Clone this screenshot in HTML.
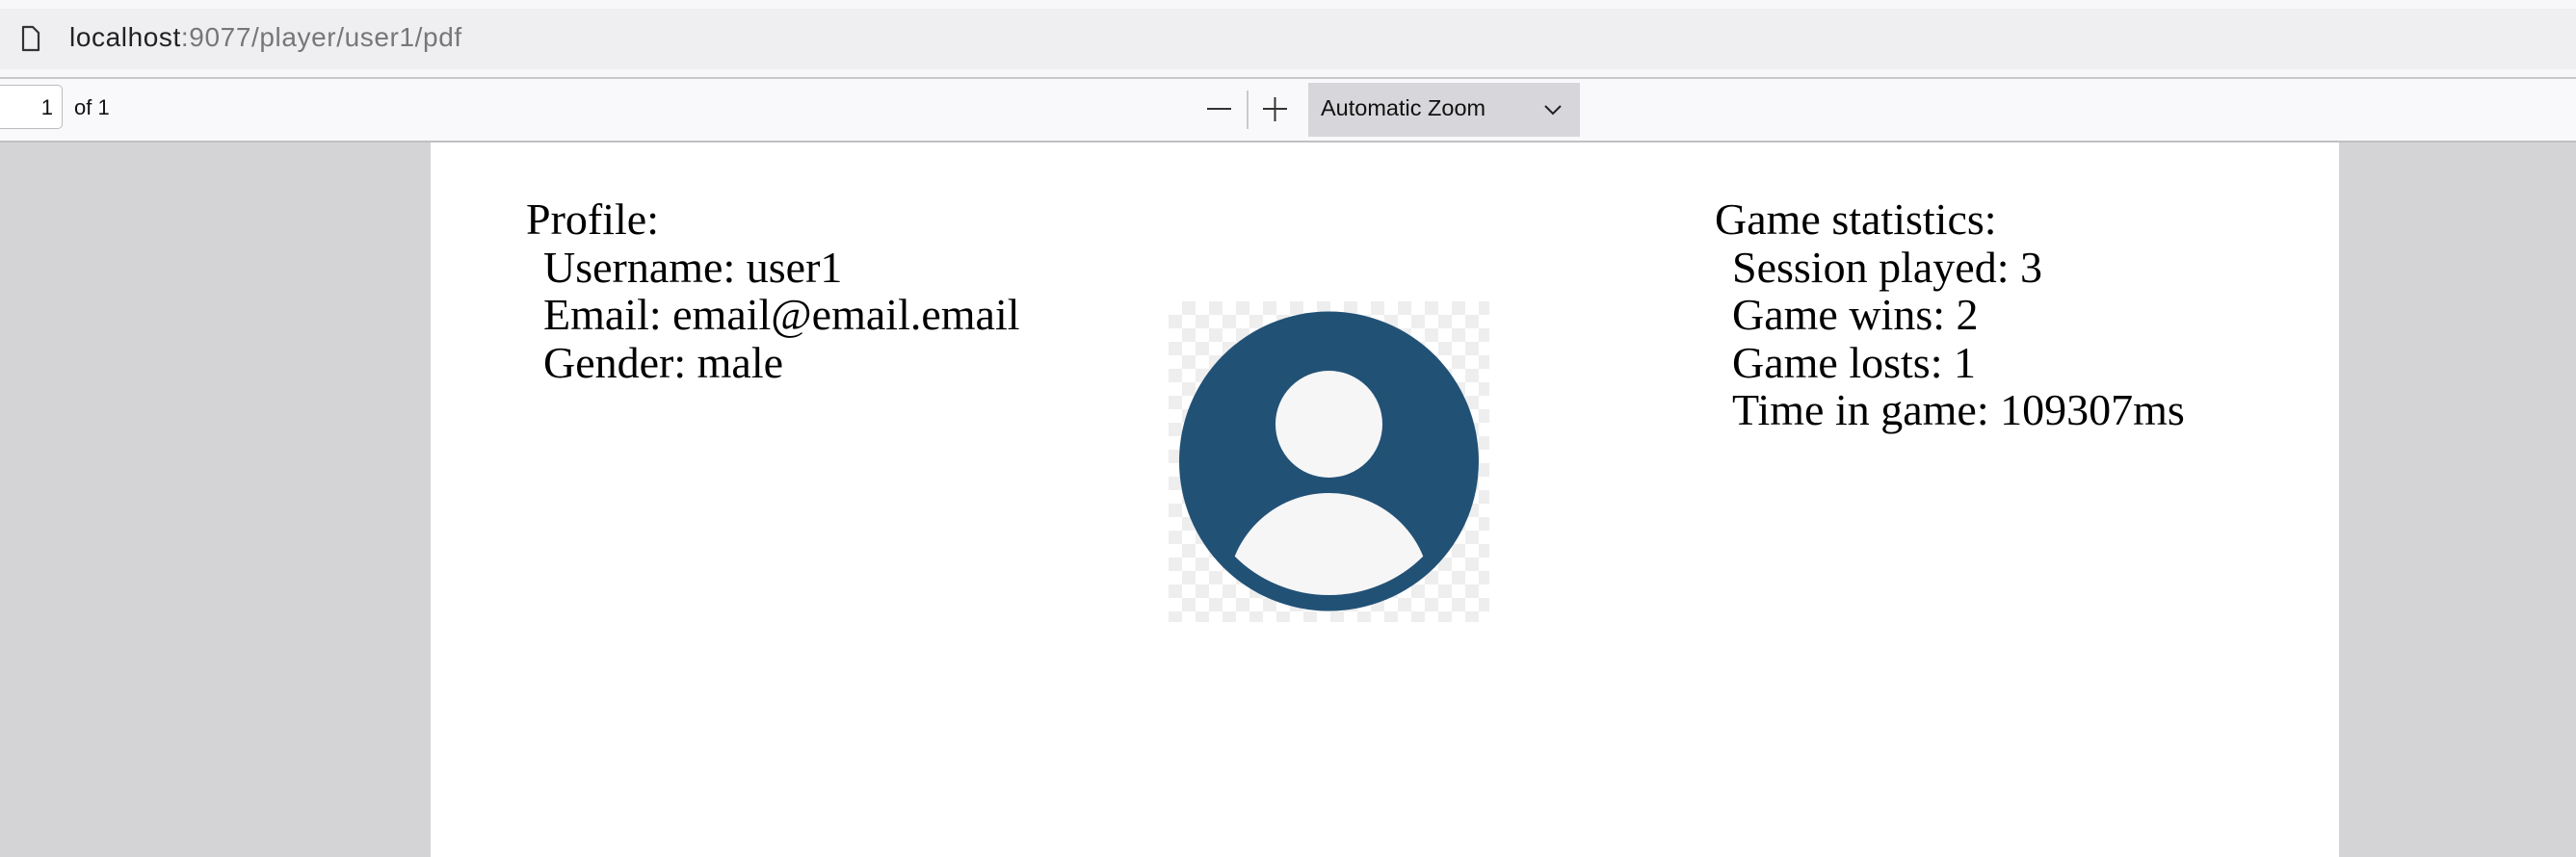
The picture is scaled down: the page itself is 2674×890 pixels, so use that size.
<!DOCTYPE html>
<html><head><meta charset="utf-8"><style>
*{margin:0;padding:0;box-sizing:border-box}
body{width:2674px;height:890px;overflow:hidden;background:#d4d4d7;position:relative;font-family:"Liberation Sans",sans-serif}
.top{position:absolute;left:0;top:0;width:2674px;height:9px;background:#f7f7f9}
.addr{position:absolute;left:0;top:9px;width:2674px;height:63px;background:#efeff2}
.gap{position:absolute;left:0;top:72px;width:2674px;height:9px;background:#f7f7f9}
.tb{position:absolute;left:0;top:80px;width:2674px;height:68px;background:#f9f9fb;border-top:2px solid #c8c8cc;border-bottom:2px solid #c0c0c4}
.url{position:absolute;left:72px;top:14px;font-size:28px;letter-spacing:0.6px;color:#222}
.url span{color:#777}
.inp{position:absolute;left:-8px;top:88px;width:73px;height:46px;background:#fff;border:1.5px solid #bbb;border-radius:5px;font-size:22px;text-align:right;padding:10px 9px 0 0;color:#111}
.of{position:absolute;left:77px;top:99px;font-size:22px;color:#111}
.zoom{position:absolute;left:1358px;top:86px;width:282px;height:56px;background:#d7d7db;font-size:23.5px;color:#111;padding:13px 0 0 13px}
.page{position:absolute;left:447px;top:148px;width:1981px;height:742px;background:#fff}
.t{position:absolute;font-family:"Liberation Serif",serif;font-size:46px;line-height:49.5px;color:#000;white-space:nowrap}
.t div{padding-left:18px}
.chk{position:absolute;left:1213px;top:313px;width:333px;height:333px;background-color:#fff;background-image:linear-gradient(45deg,#eee 25%,transparent 25%,transparent 75%,#eee 75%),linear-gradient(45deg,#eee 25%,transparent 25%,transparent 75%,#eee 75%);background-size:28px 28px;background-position:0 0,14px 14px}
</style></head><body>
<div class="top"></div>
<div class="addr">
<svg style="position:absolute;left:22px;top:17px" width="20" height="28" viewBox="0 0 20 28"><path d="M2 2h10l6 6v18H2z" fill="none" stroke="#333" stroke-width="2.2" stroke-linejoin="round"/></svg>
<div class="url">localhost<span>:9077/player/user1/pdf</span></div>
</div>
<div class="gap"></div>
<div class="tb"></div>
<div class="inp">1</div>
<div class="of">of 1</div>
<svg style="position:absolute;left:1250px;top:94px" width="90" height="40">
<line x1="3" y1="19" x2="28" y2="19" stroke="#333" stroke-width="2"/>
<line x1="45" y1="0" x2="45" y2="40" stroke="#bbb" stroke-width="1.5"/>
<line x1="61" y1="19" x2="86" y2="19" stroke="#333" stroke-width="2"/>
<line x1="73.5" y1="7" x2="73.5" y2="32" stroke="#333" stroke-width="2"/>
</svg>
<div class="zoom">Automatic Zoom</div>
<svg style="position:absolute;left:1602px;top:107px" width="20" height="14"><path d="M2 3l8 8 8-8" fill="none" stroke="#222" stroke-width="2"/></svg>
<div class="page"></div>
<div class="t" style="left:546px;top:203px">Profile:<div>Username: user1</div><div>Email: email@email.email</div><div>Gender: male</div></div>
<div class="t" style="left:1780px;top:203px">Game statistics:<div>Session played: 3</div><div>Game wins: 2</div><div>Game losts: 1</div><div>Time in game: 109307ms</div></div>
<div class="chk"></div>
<svg style="position:absolute;left:0;top:0" width="2674" height="890">
<defs><clipPath id="c"><circle cx="1379.5" cy="479" r="139"/></clipPath></defs>
<circle cx="1379.5" cy="479" r="155.5" fill="#225176"/>
<circle cx="1379.5" cy="440.5" r="55.5" fill="#f6f6f6"/>
<circle cx="1379.5" cy="617.6" r="105.6" fill="#f6f6f6" clip-path="url(#c)"/>
</svg>
</body></html>
